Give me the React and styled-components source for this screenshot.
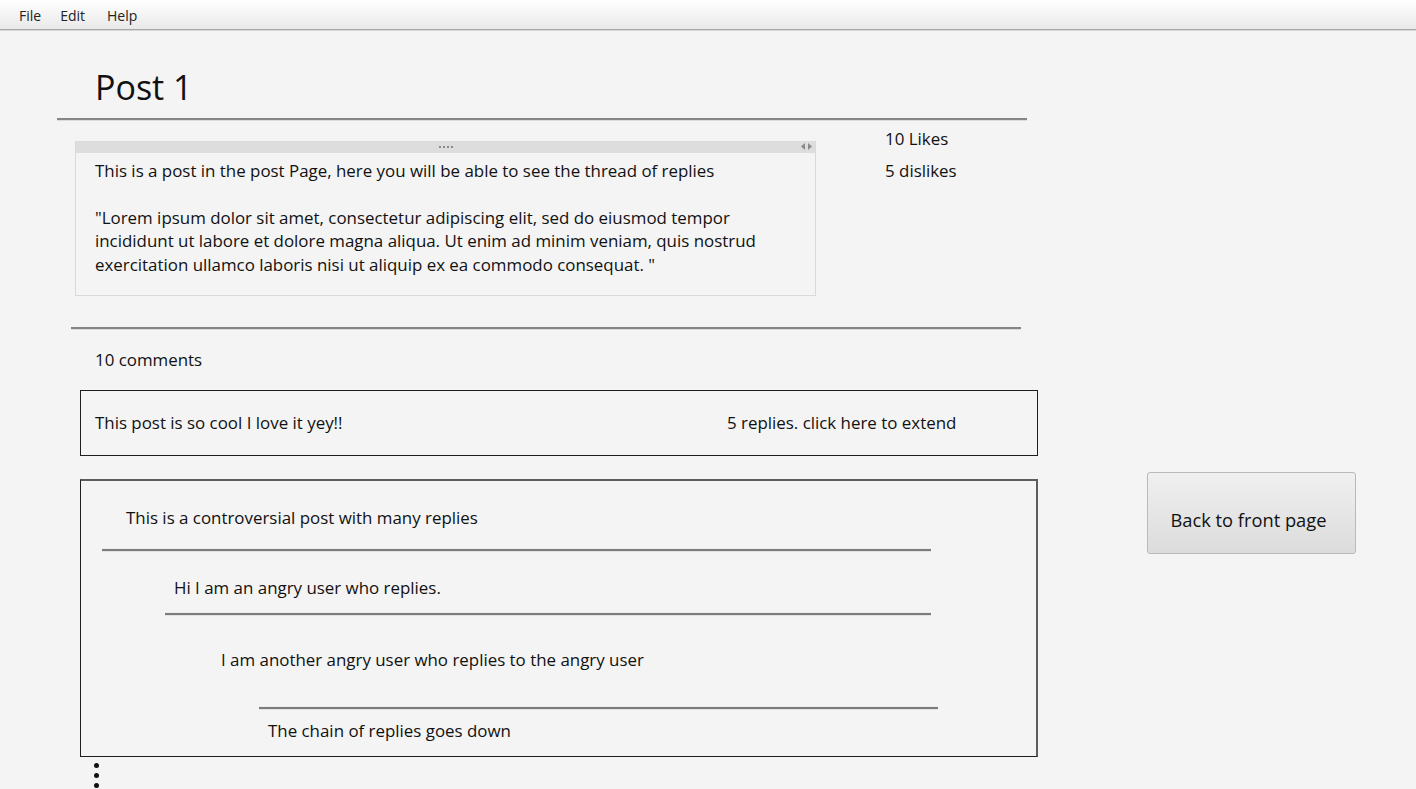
import React from "react";
import styled, { createGlobalStyle } from "styled-components";

const Global = createGlobalStyle`
  html, body { margin: 0; padding: 0; background: #f4f4f4; }
  body { font-family: "Open Sans", "Noto Sans", sans-serif; color: #111; overflow: hidden; }
  * { box-sizing: border-box; }
`;

const Page = styled.div`
  width: 1416px;
  height: 789px;
  display: flex;
  flex-direction: column;
  background: #f4f4f4;
  overflow: hidden;
`;

const MenuBar = styled.div`
  height: 30px;
  flex: none;
  display: flex;
  align-items: center;
  padding: 2px 0 0 11px;
  background: linear-gradient(#ffffff, #e9e9e9);
  border-bottom: 1px solid #a8a8a8;
  box-shadow: 0 1px 0 #d6d6d6;
`;

const MenuItem = styled.span`
  font-size: 14px;
  color: #222;
  padding: 0 8px;
  margin-right: ${(p) => p.$gap || 0}px;
`;

const Main = styled.div`
  display: flex;
  align-items: flex-start;
`;

const LeftColumn = styled.div`
  width: 1038px;
  padding-left: 57px;
  display: flex;
  flex-direction: column;
`;

const Title = styled.h1`
  margin: 35px 0 0 38px;
  font-weight: 400;
  font-size: 34px;
  line-height: 44px;
  height: 54px;
`;

const Rule = styled.div`
  height: 2px;
  background: #858585;
  margin-left: ${(p) => p.$left || 0}px;
  width: ${(p) => p.$width}px;
  margin-top: ${(p) => p.$top || 0}px;
  box-shadow: 0 1px 0 #dcdcdc;
`;

const PostRow = styled.div`
  display: flex;
  margin-top: 21px;
`;

const PostBox = styled.div`
  margin-left: 18px;
  width: 741px;
  height: 155px;
  border: 1px solid #d9d9d9;
  border-top: none;
  display: flex;
  flex-direction: column;
`;

const Divider = styled.div`
  height: 12px;
  background: #dddddd;
  position: relative;
  display: flex;
  align-items: center;
  justify-content: center;
`;

const Grip = styled.div`
  display: flex;
  gap: 2px;
  span { width: 2px; height: 2px; background: #8a8a8a; }
`;

const Arrows = styled.div`
  position: absolute;
  right: 3px;
  top: 2px;
  display: flex;
  gap: 3px;
`;

const PostBody = styled.div`
  padding: 6px 0 0 19px;
  font-size: 16.9px;
  line-height: 23.5px;
  p { margin: 0; }
`;

const Spacer = styled.div`
  height: ${(p) => p.$h}px;
`;

const Stats = styled.div`
  margin-left: 69px;
  display: flex;
  flex-direction: column;
  gap: 8px;
  margin-top: -14px;
  font-size: 16.9px;
  line-height: 24px;
`;

const Comments = styled.div`
  margin: 19px 0 0 38px;
  font-size: 16.9px;
  line-height: 24px;
`;

const CommentBox = styled.div`
  margin: 18px 0 0 23px;
  width: 958px;
  height: 66px;
  border: 1px solid #1e1e1e;
  display: flex;
  align-items: center;
  padding-left: 14px;
  font-size: 16.9px;
  padding-bottom: 1px;
`;

const CommentText = styled.span`
  width: 632px;
`;

const ThreadBox = styled.div`
  margin: 23px 0 0 23px;
  width: 958px;
  height: 278px;
  border: 1px solid #1e1e1e;
  border-top: 2px solid #5c5c5c;
  border-right: 2px solid #5c5c5c;
  display: flex;
  flex-direction: column;
  font-size: 16.9px;
  line-height: 24px;
`;

const ReplyText = styled.div`
  padding-left: ${(p) => p.$indent}px;
  margin-top: ${(p) => p.$top}px;
`;

const ReplyRule = styled.div`
  height: 2px;
  background: #7c7c7c;
  margin-left: ${(p) => p.$left}px;
  width: ${(p) => p.$width}px;
  margin-top: ${(p) => p.$top}px;
  box-shadow: 0 1px 0 #e2e2e2, 0 -1px 0 #ebebeb;
`;

const More = styled.div`
  margin: 6px 0 0 37px;
  display: flex;
  flex-direction: column;
  gap: 5px;
  span { width: 5px; height: 5px; border-radius: 50%; background: #111; }
`;

const Aside = styled.div`
  margin-left: 109px;
  padding-top: 442px;
`;

const Button = styled.button`
  width: 209px;
  height: 82px;
  border: 1px solid #b9b9b9;
  border-radius: 3px;
  background: linear-gradient(#f0f0f0, #dcdcdc);
  font-family: inherit;
  font-size: 18.3px;
  color: #111;
  padding: 12px 6px 0 0;
  cursor: pointer;
`;

export default function App() {
  return (
    <Page>
      <Global />
      <MenuBar>
        <MenuItem $gap={3}>File</MenuItem>
        <MenuItem $gap={6}>Edit</MenuItem>
        <MenuItem>Help</MenuItem>
      </MenuBar>
      <Main>
        <LeftColumn>
          <Title>Post 1</Title>
          <Rule $width={970} $top={-1} />
          <PostRow>
            <PostBox>
              <Divider>
                <Grip>
                  <span />
                  <span />
                  <span />
                  <span />
                </Grip>
                <Arrows>
                  <svg width="4" height="7" viewBox="0 0 4 7">
                    <path d="M4 0 L0 3.5 L4 7 Z" fill="#8a8a8a" />
                  </svg>
                  <svg width="4" height="7" viewBox="0 0 4 7">
                    <path d="M0 0 L4 3.5 L0 7 Z" fill="#8a8a8a" />
                  </svg>
                </Arrows>
              </Divider>
              <PostBody>
                <p>This is a post in the post Page, here you will be able to see the thread of replies</p>
                <Spacer $h={23} />
                <p>
                  "Lorem ipsum dolor sit amet, consectetur adipiscing elit, sed do eiusmod tempor
                  <br />
                  incididunt ut labore et dolore magna aliqua. Ut enim ad minim veniam, quis nostrud
                  <br />
                  exercitation ullamco laboris nisi ut aliquip ex ea commodo consequat. "
                </p>
              </PostBody>
            </PostBox>
            <Stats>
              <span>10 Likes</span>
              <span>5 dislikes</span>
            </Stats>
          </PostRow>
          <Rule $left={14} $width={950} $top={31} />
          <Comments>10 comments</Comments>
          <CommentBox>
            <CommentText>This post is so cool I love it yey!!</CommentText>
            <span>5 replies. click here to extend</span>
          </CommentBox>
          <ThreadBox>
            <ReplyText $indent={45} $top={25}>This is a controversial post with many replies</ReplyText>
            <ReplyRule $left={21} $width={829} $top={19} />
            <ReplyText $indent={93} $top={25}>Hi I am an angry user who replies.</ReplyText>
            <ReplyRule $left={84} $width={766} $top={13} />
            <ReplyText $indent={140} $top={33}>I am another angry user who replies to the angry user</ReplyText>
            <ReplyRule $left={178} $width={679} $top={35} />
            <ReplyText $indent={187} $top={10}>The chain of replies goes down</ReplyText>
          </ThreadBox>
          <More>
            <span />
            <span />
            <span />
          </More>
        </LeftColumn>
        <Aside>
          <Button>Back to front page</Button>
        </Aside>
      </Main>
    </Page>
  );
}
